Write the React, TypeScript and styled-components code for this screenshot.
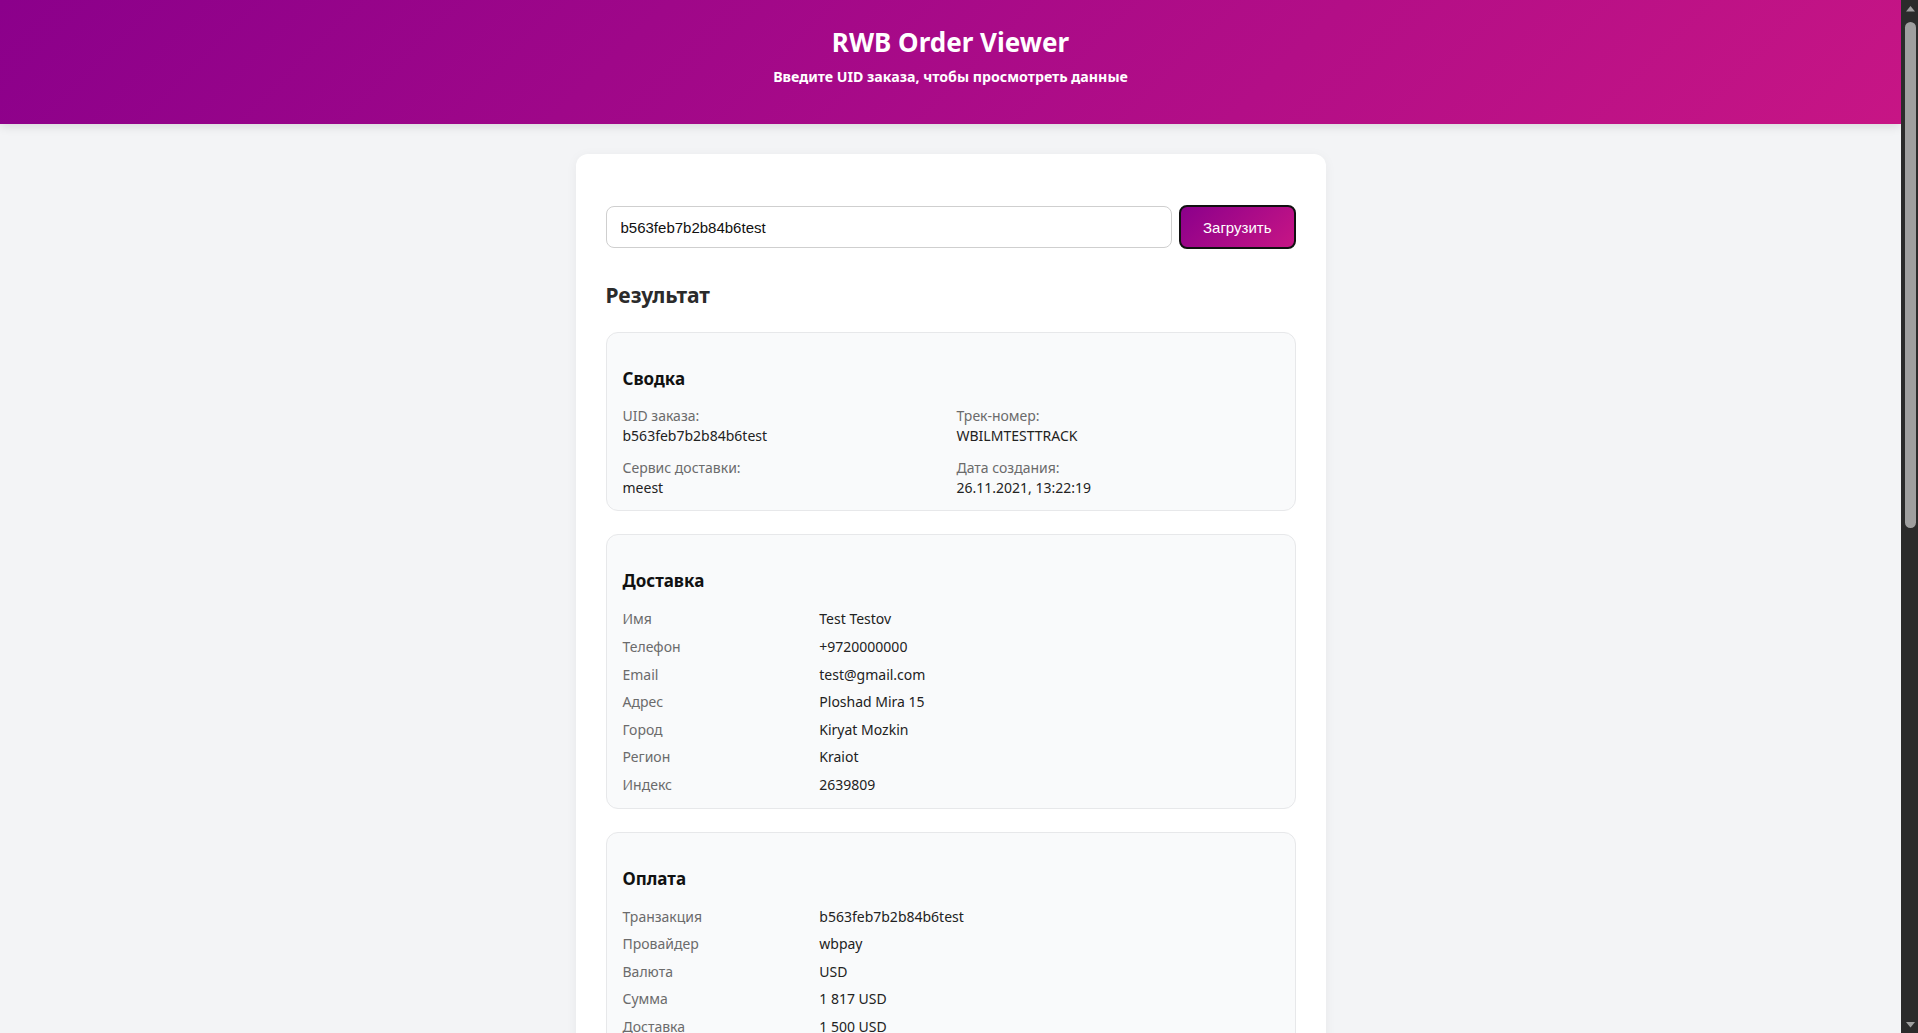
import React from "react";
import styled, { createGlobalStyle } from "styled-components";

const GlobalStyle = createGlobalStyle`
  html, body {
    margin: 0;
    height: 100%;
    overflow: hidden;
    background: #f3f4f6;
  }
  body {
    font-family: "Noto Sans", "Open Sans", sans-serif;
    color: #222;
  }
  #root { height: 100%; }
  * { box-sizing: border-box; }
`;

const Frame = styled.div`
  display: flex;
  height: 100vh;
  background: #f3f4f6;
`;

const Viewport = styled.div`
  flex: 1;
  min-width: 0;
  height: 100%;
  overflow-y: auto;
  scrollbar-width: none;
  &::-webkit-scrollbar { display: none; }
`;

const ScrollRail = styled.div`
  width: 17px;
  flex: 0 0 17px;
  height: 100%;
  background: #2b2b2b;
  display: flex;
  flex-direction: column;
`;

const ScrollArrow = styled.div`
  height: 17px;
  flex: 0 0 17px;
  display: flex;
  align-items: center;
  justify-content: center;
  padding-left: 1px;
`;

const ScrollThumb = styled.div`
  height: 506px;
  margin: 5px 2px 0 4px;
  border-radius: 6px;
  background: #9f9f9f;
`;

const ScrollSpacer = styled.div`
  flex: 1;
`;

const Header = styled.header`
  background: linear-gradient(135deg, #8b008b 0%, #c71585 100%);
  color: #fff;
  text-align: center;
  padding: 25px 20px 37px;
  box-shadow: 0 2px 10px rgba(0, 0, 0, 0.12);
`;

const Title = styled.h1`
  margin: 0 0 8px;
  font-size: 26px;
  line-height: 34px;
  font-weight: 700;
`;

const Subtitle = styled.p`
  margin: 0;
  font-size: 14.2px;
  line-height: 20px;
  font-weight: 700;
`;

const Main = styled.main`
  padding: 30px 0 40px;
`;

const Card = styled.div`
  width: 750px;
  margin: 0 auto;
  background: #fff;
  border-radius: 12px;
  padding: 51px 30px 30px;
  box-shadow: 0 2px 12px rgba(0, 0, 0, 0.05);
`;

const SearchForm = styled.form`
  display: flex;
  align-items: center;
  gap: 7px;
`;

const Input = styled.input`
  flex: 1;
  height: 42px;
  border: 1px solid #cfcfcf;
  border-radius: 8px;
  padding: 0 14px;
  font-family: "Liberation Sans", Arial, sans-serif;
  font-size: 15px;
  color: #111;
  background: #fff;
  outline: none;
`;

const Button = styled.button`
  height: 44px;
  padding: 0 22px;
  border: 2px solid #111;
  border-radius: 8px;
  background: linear-gradient(135deg, #8b008b 0%, #c71585 100%);
  color: #fff;
  font-family: "Liberation Sans", Arial, sans-serif;
  font-size: 15px;
  cursor: pointer;
`;

const ResultTitle = styled.h2`
  margin: 31px 0 22px;
  font-size: 21px;
  line-height: 30px;
  font-weight: 700;
  color: #2b2b2b;
`;

const Section = styled.section<{ $variant?: "summary" | "list" }>`
  background: #f9fafb;
  border: 1px solid #e7e8ea;
  border-radius: 12px;
  padding: 16px 16px ${(p) => (p.$variant === "list" ? "9px" : "13px")};
  margin-bottom: 23px;
`;

const SectionTitle = styled.h3`
  margin: 18px 0 12px;
  font-size: 17px;
  line-height: 24px;
  font-weight: 700;
  color: #111;
`;

const SummaryGrid = styled.div`
  display: grid;
  grid-template-columns: 1fr 1fr;
  column-gap: 12px;
  row-gap: 13px;
  padding-top: 3px;
`;

const SummaryItem = styled.div`
  display: flex;
  flex-direction: column;
`;

const Label = styled.span`
  font-size: 14px;
  line-height: 19.6px;
  color: #6b6b6b;
`;

const Value = styled.span`
  font-size: 14px;
  line-height: 19.6px;
  color: #222;
`;

const KVList = styled.div`
  display: grid;
  grid-template-columns: 30% 1fr;
`;

const KVCell = styled.div<{ $label?: boolean }>`
  padding: 4px 0;
  font-size: 14px;
  line-height: 19.6px;
  color: ${(p) => (p.$label ? "#6b6b6b" : "#222")};
`;

type Row = [string, string];

const summary: Row[] = [
  ["UID заказа:", "b563feb7b2b84b6test"],
  ["Трек-номер:", "WBILMTESTTRACK"],
  ["Сервис доставки:", "meest"],
  ["Дата создания:", "26.11.2021, 13:22:19"],
];

const delivery: Row[] = [
  ["Имя", "Test Testov"],
  ["Телефон", "+9720000000"],
  ["Email", "test@gmail.com"],
  ["Адрес", "Ploshad Mira 15"],
  ["Город", "Kiryat Mozkin"],
  ["Регион", "Kraiot"],
  ["Индекс", "2639809"],
];

const payment: Row[] = [
  ["Транзакция", "b563feb7b2b84b6test"],
  ["Провайдер", "wbpay"],
  ["Валюта", "USD"],
  ["Сумма", "1 817 USD"],
  ["Доставка", "1 500 USD"],
  ["Товары", "317 USD"],
  ["Таможенный сбор", "0 USD"],
  ["Банк", "alpha"],
  ["Дата оплаты", "29.05.2021, 12:47:17"],
];

const items: Row[] = [
  ["Название", "Mascaras"],
  ["Бренд", "Vivienne Sabo"],
  ["Артикул (nm_id)", "2389212"],
  ["chrt_id", "9934930"],
  ["Цена", "453 USD"],
  ["Скидка", "30%"],
  ["Итого", "317 USD"],
  ["Размер", "0"],
  ["Статус", "202"],
  ["RID", "ab4219087a764ae0btest"],
  ["Трек-номер", "WBILMTESTTRACK"],
];

function KVSection({ title, rows }: { title: string; rows: Row[] }) {
  return (
    <Section $variant="list">
      <SectionTitle>{title}</SectionTitle>
      <KVList>
        {rows.map(([k, v]) => (
          <React.Fragment key={k}>
            <KVCell $label>{k}</KVCell>
            <KVCell>{v}</KVCell>
          </React.Fragment>
        ))}
      </KVList>
    </Section>
  );
}

function Arrow({ down }: { down?: boolean }) {
  return (
    <ScrollArrow>
      <svg width="9" height="6" viewBox="0 0 9 6">
        <polygon
          points={down ? "0,0 9,0 4.5,5.5" : "0,5.5 9,5.5 4.5,0"}
          fill="#9f9f9f"
        />
      </svg>
    </ScrollArrow>
  );
}

export default function App() {
  return (
    <Frame>
      <GlobalStyle />
      <Viewport>
        <Header>
          <Title>RWB Order Viewer</Title>
          <Subtitle>Введите UID заказа, чтобы просмотреть данные</Subtitle>
        </Header>
        <Main>
          <Card>
            <SearchForm onSubmit={(e) => e.preventDefault()}>
              <Input defaultValue="b563feb7b2b84b6test" />
              <Button type="submit">Загрузить</Button>
            </SearchForm>
            <ResultTitle>Результат</ResultTitle>
            <Section $variant="summary">
              <SectionTitle>Сводка</SectionTitle>
              <SummaryGrid>
                {summary.map(([k, v]) => (
                  <SummaryItem key={k}>
                    <Label>{k}</Label>
                    <Value>{v}</Value>
                  </SummaryItem>
                ))}
              </SummaryGrid>
            </Section>
            <KVSection title="Доставка" rows={delivery} />
            <KVSection title="Оплата" rows={payment} />
            <KVSection title="Товары" rows={items} />
          </Card>
        </Main>
      </Viewport>
      <ScrollRail aria-hidden>
        <Arrow />
        <ScrollThumb />
        <ScrollSpacer />
        <Arrow down />
      </ScrollRail>
    </Frame>
  );
}
